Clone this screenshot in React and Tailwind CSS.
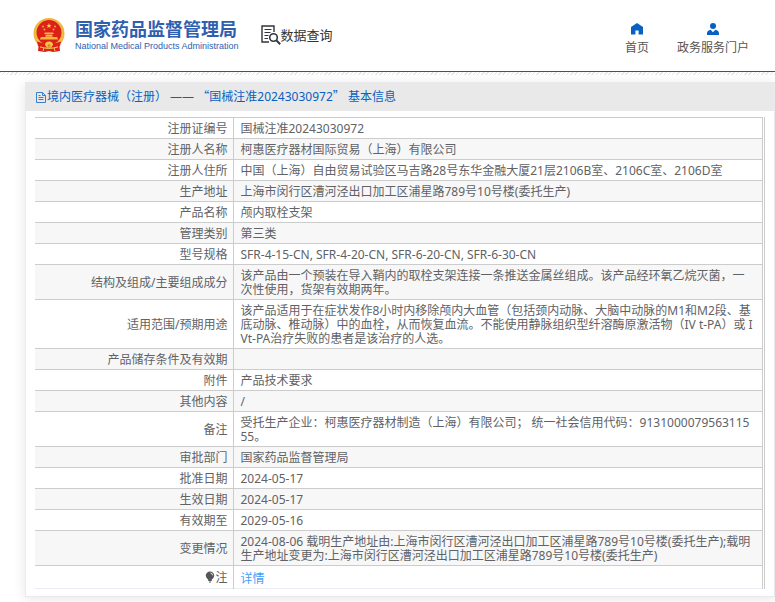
import React from 'react';

const rows = [
  { label: '注册证编号', value: '国械注准20243030972' },
  { label: '注册人名称', value: '柯惠医疗器材国际贸易（上海）有限公司' },
  { label: '注册人住所', value: '中国（上海）自由贸易试验区马吉路28号东华金融大厦21层2106B室、2106C室、2106D室' },
  { label: '生产地址', value: '上海市闵行区漕河泾出口加工区浦星路789号10号楼(委托生产)' },
  { label: '产品名称', value: '颅内取栓支架' },
  { label: '管理类别', value: '第三类' },
  { label: '型号规格', value: 'SFR-4-15-CN, SFR-4-20-CN, SFR-6-20-CN, SFR-6-30-CN' },
  { label: '结构及组成/主要组成成分', value: '该产品由一个预装在导入鞘内的取栓支架连接一条推送金属丝组成。该产品经环氧乙烷灭菌，一次性使用，货架有效期两年。' },
  { label: '适用范围/预期用途', value: '该产品适用于在症状发作8小时内移除颅内大血管（包括颈内动脉、大脑中动脉的M1和M2段、基底动脉、椎动脉）中的血栓，从而恢复血流。不能使用静脉组织型纤溶酶原激活物（IV t-PA）或 IVt-PA治疗失败的患者是该治疗的人选。' },
  { label: '产品储存条件及有效期', value: '' },
  { label: '附件', value: '产品技术要求' },
  { label: '其他内容', value: '/' },
  { label: '备注', value: '受托生产企业：柯惠医疗器材制造（上海）有限公司； 统一社会信用代码：913100007956311555。' },
  { label: '审批部门', value: '国家药品监督管理局' },
  { label: '批准日期', value: '2024-05-17' },
  { label: '生效日期', value: '2024-05-17' },
  { label: '有效期至', value: '2029-05-16' },
  { label: '变更情况', value: '2024-08-06 载明生产地址由:上海市闵行区漕河泾出口加工区浦星路789号10号楼(委托生产);载明生产地址变更为:上海市闵行区漕河泾出口加工区浦星路789号10号楼(委托生产)' },
];

const Emblem = () => (
  <svg viewBox="0 0 32 35" className="h-[35px] w-8" aria-hidden="true">
    <path d="M6 24H26L27 33L20 34L16 33L12 34L5 33Z" fill="#d9231c" />
    <circle cx="16" cy="15.5" r="15.5" fill="#f0bd45" />
    <circle cx="16" cy="15.5" r="14.6" fill="none" stroke="#e3a838" strokeWidth="0.8" strokeDasharray="1.5 1" />
    <circle cx="16" cy="14.5" r="12.5" fill="#dd2018" />
    <path d="M16 5l.7 1.900h2l-1.600 1.200.6 2-1.700-1.200-1.700 1.200.6-2-1.600-1.200h2z" fill="#f6cf4f" />
    <g fill="#f0b640">
      <circle cx="10" cy="8.5" r="0.9" />
      <circle cx="11.5" cy="11.5" r="0.9" />
      <circle cx="20.5" cy="11.5" r="0.9" />
      <circle cx="22" cy="8.5" r="0.9" />
      <path d="M12 14.5h8l1 1.600H11zM12.500 16.500h7v2.200h-7zM8 19h16l1.200 2.400H6.800z" />
    </g>
    <path d="M4 23.500Q16 28 28 23.500L27 28Q16 31 5 28Z" fill="#dd2018" />
    <path d="M12 27a4 3.500 0 0 1 8 0l-2 2.500h-4z" fill="#f3c64a" />
    <circle cx="16" cy="27.500" r="1.500" fill="#e08a25" />
    <path d="M7 29l4 1-1 3M25 29l-4 1 1 3" fill="none" stroke="#f3c64a" strokeWidth="1" />
  </svg>
);

const SearchDocIcon = () => (
  <svg viewBox="0 0 20 20" className="h-5 w-5" fill="none" stroke="#33333d" aria-hidden="true">
    <path d="M8 17H1V1h12v6" strokeWidth="1.4" />
    <path d="M3.5 4.5h7M3.5 7.5h6M3.5 10.5h4M3.5 13.5h3.5" strokeWidth="1" />
    <circle cx="12.5" cy="12.5" r="3.8" strokeWidth="1.6" />
    <path d="M15.4 15.4l3.8 3.8" strokeWidth="2" />
  </svg>
);

const HomeIcon = () => (
  <svg viewBox="0 0 12 12" className="h-3 w-3" fill="#0860c4" aria-hidden="true">
    <path d="M6 0L12 4V11.5H7.6V7.5H4.4V11.5H0V4z" />
  </svg>
);

const UserIcon = () => (
  <svg viewBox="0 0 12 12" className="h-3 w-3" fill="#0860c4" aria-hidden="true">
    <circle cx="6" cy="3" r="3" />
    <path d="M0 12V10.5C0 8.5 1.5 7 3.6 6.8L6 9.2 8.4 6.8C10.5 7 12 8.5 12 10.5V12z" />
  </svg>
);

const DocIcon = () => (
  <svg viewBox="0 0 12 12" className="h-3 w-3 shrink-0" fill="none" stroke="#3b7fcb" aria-hidden="true">
    <path d="M1.5 1.5H7.5L10.5 4.5V11.5H1.5zM7.5 1.5V4.5H10.5" />
    <path d="M3.5 4.5H5.5M3.5 6.5H8.5M3.5 8.5H8.5" />
  </svg>
);

const BulbIcon = () => (
  <svg viewBox="0 0 10 12" className="inline-block h-3 w-[10px] align-[-1px]" fill="#55565a" aria-hidden="true">
    <circle cx="5" cy="4.6" r="4.2" />
    <path d="M3.2 8h3.6v2H3.2zM4 10.5h2V11.5H4z" />
    <path d="M5.5 2q2 .2 2.2 2.4" fill="none" stroke="#fff" strokeWidth="0.8" />
  </svg>
);

const NavLink = ({ icon, text }) => (
  <a href="#" className="flex flex-col items-center gap-[6px] text-xs leading-[14px] text-[#555555]">
    {icon}
    {text}
  </a>
);

const InfoRow = ({ label, children }) => (
  <tr className="even:bg-[#f7f7f7]">
    <th scope="row" className="w-[198px] border-y border-r border-[#cccccc] pb-[2px] pr-[5px] pt-1 text-right font-normal">
      {label}
    </th>
    <td className="h-[21px] break-all border border-[#cccccc] pb-[2px] pl-[7px] pr-[6px] pt-1">{children}</td>
  </tr>
);

export default function App() {
  return (
    <div className="bg-white pb-[5px] font-['Noto_Sans','Noto_Sans_CJK_SC',sans-serif] text-xs leading-[14px] text-[#606266]">
      <header className="flex h-[72px] items-center border-b border-[#0a5fb5] pl-[33px] pr-[26px]">
        <a href="#" className="flex items-center gap-[10px]">
          <Emblem />
          <div className="whitespace-nowrap pb-px text-[#2f60b0]">
            <div className="font-['Noto_Sans_CJK_SC',sans-serif] text-[18px] font-bold leading-[22px]">国家药品监督管理局</div>
            <div className="font-['Liberation_Sans',sans-serif] text-[9px] leading-[14px]">National Medical Products Administration</div>
          </div>
        </a>
        <a href="#" className="ml-[22px] flex items-center pb-[2px] text-[13px] leading-5 text-[#333333]">
          <SearchDocIcon />
          数据查询
        </a>
        <nav className="ml-auto flex gap-7 pt-[6px]">
          <NavLink icon={<HomeIcon />} text="首页" />
          <NavLink icon={<UserIcon />} text="政务服务门户" />
        </nav>
      </header>
      <div className="h-[3px] bg-[repeating-linear-gradient(135deg,#e6e6e6_0,#e6e6e6_1px,#ffffff_1px,#ffffff_3px)]" />

      <main className="ml-[25px] mt-[7px] border border-[#e9e9ee] shadow-[0_2px_12px_0_rgba(0,0,0,0.1)]">
        <h1 className="flex h-7 items-center bg-[#e9e9e9] pb-px pl-[9px] text-[#0a5fc0]">
          <DocIcon />
          <span>
            境内医疗器械（注册） —— <span className="font-['Noto_Sans_CJK_SC',sans-serif]">“</span>国械注准20243030972
            <span className="font-['Noto_Sans_CJK_SC',sans-serif]">”</span> 基本信息
          </span>
        </h1>
        <div className="px-[9px] pb-[7px] pt-[6px]">
          <div className="border-r border-[#cccccc] pr-px">
            <table className="w-full border-collapse">
              <tbody>
                {rows.map((row) => (
                  <InfoRow key={row.label} label={row.label}>
                    {row.value}
                  </InfoRow>
                ))}
                <tr className="border-b border-[#ebeef5]">
                  <th scope="row" className="border-r border-[#cccccc] pb-[3px] pr-[5px] pt-1 text-right font-normal">
                    <BulbIcon />注
                  </th>
                  <td className="border-r border-[#cccccc] pb-[2px] pl-[7px] pr-[6px] pt-[6px]">
                    <a href="#" className="text-[#409eff]">详情</a>
                  </td>
                </tr>
              </tbody>
            </table>
          </div>
        </div>
      </main>
    </div>
  );
}
